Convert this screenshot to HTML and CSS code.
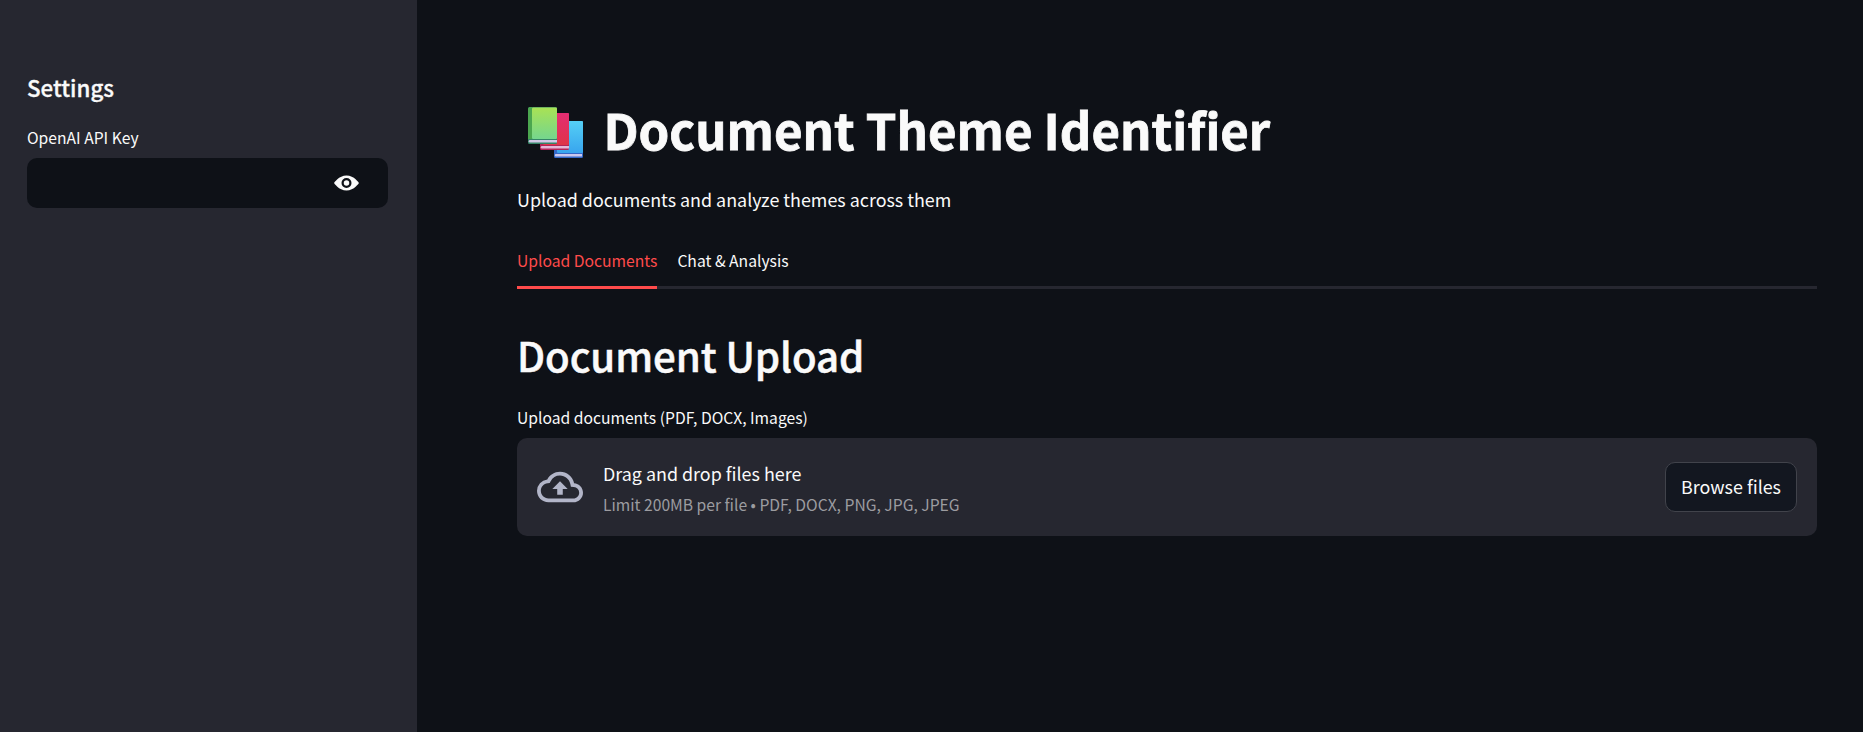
FILE: index.html
```html
<!DOCTYPE html>
<html lang="en">
<head>
<meta charset="utf-8">
<title>Document Theme Identifier</title>
<link rel="stylesheet" href="styles.css">
</head>
<body>
<div class="app">
  <aside class="sidebar">
    <h2 class="sidebar-title"><span>Settings</span></h2>
    <div class="label key-label"><span>OpenAI API Key</span></div>
    <div class="key-input">
      <svg class="eye" viewBox="0 0 10 8" fill="currentColor"><path fill-rule="evenodd" d="M5 1C1.900 1 0 4 0 4s1.900 3 5 3 5-3 5-3S8.100 1 5 1zM5 2a2 2 0 110 4 2 2 0 010-4z"/><circle cx="5" cy="4" r="1.100"/></svg>
    </div>
  </aside>
  <main class="main">
    <h1 class="title">
      <svg class="books" viewBox="0 0 55 51">
        <defs>
          <linearGradient id="green" x2="0" y2="1"><stop stop-color="#a9e254"/><stop offset="1" stop-color="#75d68e"/></linearGradient>
          <linearGradient id="red" x2="0" y2="1"><stop stop-color="#e42d72"/><stop offset="1" stop-color="#df3448"/></linearGradient>
          <linearGradient id="blue" x2="0" y2="1"><stop stop-color="#55cff5"/><stop offset="1" stop-color="#38a5ee"/></linearGradient>
        </defs>
        <rect x="26" y="14" width="29" height="37" rx="1.5" fill="#3469c8"/>
        <rect x="29" y="14" width="26" height="32" rx="1" fill="url(#blue)"/>
        <path d="M28 47h26v2.500H28a1.200 1.200 0 010-2.500z" fill="#cbc8ee"/>
        <rect x="12" y="6" width="29" height="37" rx="1.500" fill="#b32458"/>
        <rect x="15" y="6" width="26" height="32" rx="1" fill="url(#red)"/>
        <path d="M14 39h27v2.500H14a1.200 1.200 0 010-2.500z" fill="#e5b6d7"/>
        <rect width="29" height="37" rx="1.500" fill="#368568"/>
        <path d="M1.500 0H4v32H0V1.500z" fill="#4ba64f"/>
        <rect x="4" y=".5" width="25" height="31.500" rx="1" fill="url(#green)"/>
        <path d="M2 33h27v2.500H2a1.200 1.200 0 010-2.500z" fill="#d3c8e7"/>
      </svg>
      <span>Document Theme Identifier</span>
    </h1>
    <p class="intro"><span>Upload documents and analyze themes across them</span></p>
    <nav class="tabs">
      <a class="tab active"><span>Upload Documents</span></a>
      <a class="tab"><span>Chat &amp; Analysis</span></a>
    </nav>
    <h2 class="heading"><span>Document Upload</span></h2>
    <div class="label upload-label"><span>Upload documents (PDF, DOCX, Images)</span></div>
    <section class="dropzone">
      <svg class="cloud" viewBox="0 0 24 24" fill="currentColor"><path d="M19.350 10.040A7.490 7.490 0 0012 4C9.110 4 6.600 5.640 5.350 8.040A5.994 5.994 0 000 14c0 3.310 2.690 6 6 6h13c2.760 0 5-2.240 5-5 0-2.640-2.050-4.780-4.650-4.960zM19 18H6c-2.210 0-4-1.790-4-4 0-2.050 1.530-3.760 3.560-3.970l1.070-.110.500-.950A5.469 5.469 0 0112 6c2.620 0 4.880 1.860 5.390 4.430l.300 1.500 1.530.110A2.980 2.980 0 0122 15c0 1.650-1.350 3-3 3zM8 13h2.550v3h2.900v-3H16l-4-4z"/></svg>
      <div class="drop-text">
        <div class="drop-title"><span>Drag and drop files here</span></div>
        <div class="drop-hint"><span>Limit 200MB per file • PDF, DOCX, PNG, JPG, JPEG</span></div>
      </div>
      <button class="browse"><span>Browse files</span></button>
    </section>
  </main>
</div>
</body>
</html>
```

FILE: styles.css
```css
* { box-sizing: border-box; }
body {
  margin: 0;
  background: #0e1117;
  color: #fafafa;
  font: 400 17.9px/30px "Noto Sans CJK JP", "Noto Sans", sans-serif;
}
h1, h2, p { margin: 0; }
svg { display: block; flex: none; }
.app { display: flex; height: 732px; overflow: hidden; white-space: nowrap; }
.sidebar { width: 417px; flex: none; padding: 72px 29px 0 27px; background: #262730; }
.sidebar-title { font-size: 22.3px; line-height: 30px; font-weight: 500; -webkit-text-stroke: 0.3px #fafafa; }
.label { font-size: 15.66px; line-height: 24px; }
.key-label { margin-top: 24px; }
.key-input {
  display: flex; align-items: center; justify-content: flex-end;
  height: 50px; margin-top: 8px; padding-right: 29px;
  background: #0e1117; border-radius: 10px;
}
.eye { width: 25px; height: 20px; }
.main { flex: 1; padding: 99px 46px 0 100px; }
.title { display: flex; align-items: center; height: 60px; font-size: 49.15px; line-height: 60px; font-weight: 700; -webkit-text-stroke: 0.8px #fafafa; }
.books { width: 55px; height: 51px; margin: 7px 20.5px 0 11px; }
.intro { margin-top: 25px; }
.tabs { display: flex; gap: 20px; margin-top: 35px; height: 40px; box-shadow: inset 0 -3px #262730; }
.tab { font-size: 15.68px; line-height: 24px; }
.tab.active { color: #ff4b4b; border-bottom: 3px solid #ff4b4b; }
.heading { margin-top: 39px; font-size: 40.2px; line-height: 54px; font-weight: 500; letter-spacing: -0.08px; -webkit-text-stroke: 0.5px #fafafa; }
.upload-label { margin-top: 24px; }
.dropzone {
  display: flex; align-items: center; height: 98px; margin-top: 8px; padding: 0 20px;
  background: #262730; border-radius: 10px;
}
.cloud { width: 46px; height: 46px; color: #b2b5c8; }
.drop-text { margin-left: 20px; padding-top: 1px; flex: 1; }
.drop-hint { margin-top: 5px; font-size: 15.66px; line-height: 24px; color: #9c9ca0; }
.browse {
  width: 132px; height: 50px; padding: 0 0 2px; border: 1px solid #41434b; border-radius: 10px;
  background: #131720; color: inherit; font: inherit;
}
```
